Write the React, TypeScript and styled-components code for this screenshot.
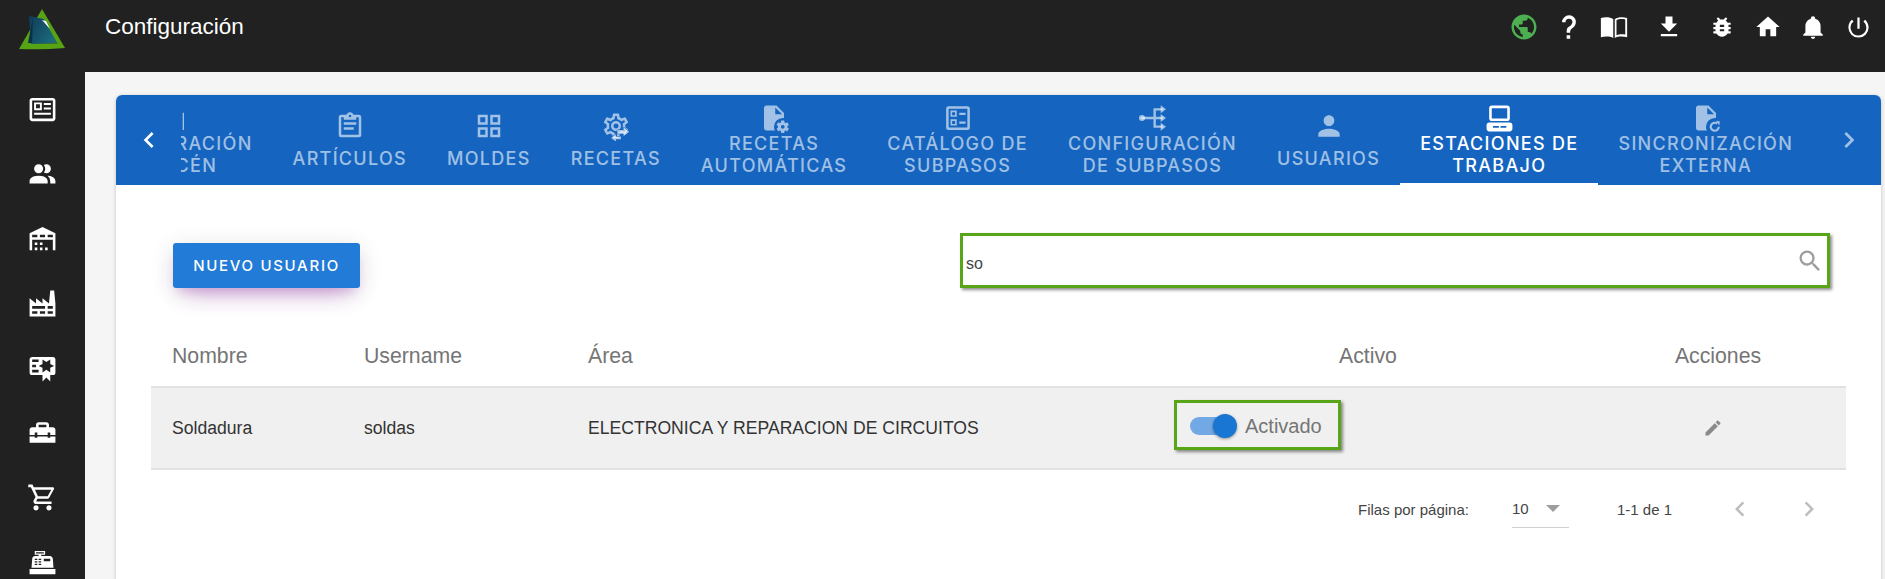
import { ReactNode } from 'react';
import styled, { createGlobalStyle } from 'styled-components';
import {
  MdChevronLeft,
  MdChevronRight,
  MdEdit,
  MdOutlineGridView,
  MdPerson,
  MdPowerSettingsNew,
  MdPublic,
  MdSearch,
} from 'react-icons/md';

const GlobalStyle = createGlobalStyle`
  html, body {
    margin: 0;
    height: 100%;
    overflow: hidden;
    background: #f5f5f5;
    font-family: "Liberation Sans", Arial, sans-serif;
  }
  #root {
    height: 100%;
  }
`;

const Shell = styled.div`
  display: grid;
  grid-template-columns: 85px 1fr;
  grid-template-rows: 72px 1fr;
  height: 100vh;
  overflow: hidden;
`;

const Sidebar = styled.aside`
  grid-row: 1 / 3;
  background: #212121;
  overflow: hidden;
`;

const LogoWrap = styled.div`
  height: 72px;
  padding: 9px 0 0 19px;
  box-sizing: border-box;
`;

const SideNav = styled.nav`
  padding-top: 5px;
`;

const SideItem = styled.div`
  height: 64.7px;
  display: flex;
  align-items: center;
  justify-content: center;
  color: #fff;
`;

const Header = styled.header`
  background: #212121;
  color: #fff;
  display: flex;
  align-items: flex-start;
  justify-content: space-between;
  padding-right: 4px;
`;

const Title = styled.h1`
  margin: 0;
  padding-left: 20px;
  font: 400 22.5px/54px "Liberation Sans", Arial, sans-serif;
  color: #fff;
`;

const TopIcons = styled.div`
  display: flex;
  height: 54px;
  align-items: center;
`;

const TopIcon = styled.span<{ $extra?: number; $color?: string }>`
  width: 45px;
  margin-left: ${(p) => p.$extra ?? 0}px;
  display: flex;
  align-items: center;
  justify-content: center;
  color: ${(p) => p.$color ?? '#fff'};
`;

const Main = styled.main`
  padding: 23px 4px 0 31px;
  min-width: 0;
`;

const Card = styled.section`
  background: #fff;
  border-radius: 6px;
  height: 520px;
  box-shadow: 0 1px 4px rgba(0, 0, 0, 0.2);
  overflow: hidden;
`;

const TabBar = styled.div`
  height: 90px;
  background: #1565c0;
  display: flex;
`;

const ScrollButton = styled.div<{ $faded?: boolean }>`
  width: 65px;
  flex: none;
  display: flex;
  align-items: center;
  justify-content: center;
  color: ${(p) => (p.$faded ? 'rgba(255,255,255,.6)' : '#fff')};
`;

const TabScroller = styled.div`
  flex: 1;
  min-width: 0;
  overflow: hidden;
`;

const TabStrip = styled.div`
  display: flex;
  height: 100%;
  margin-left: -117.5px;
`;

const Tab = styled.div<{ $active?: boolean; $lines: number }>`
  flex: none;
  height: 100%;
  box-sizing: border-box;
  padding: 5px 20px 0;
  display: flex;
  flex-direction: column;
  align-items: center;
  justify-content: center;
  gap: ${(p) => (p.$lines === 1 ? 10 : 3)}px;
  color: ${(p) => (p.$active ? '#fff' : 'rgba(255,255,255,.6)')};
  border-bottom: 2px solid ${(p) => (p.$active ? '#fff' : 'transparent')};
`;

const TabIcon = styled.span`
  height: 24px;
  display: flex;
  align-items: center;
  justify-content: center;
`;

const TabLabel = styled.span`
  font: 500 18px/21.6px Inter, sans-serif;
  letter-spacing: 1.3px;
  text-align: center;
  white-space: pre-line;
`;

const Toolbar = styled.div`
  display: flex;
  align-items: flex-end;
  justify-content: space-between;
  padding: 48px 51px 0 57px;
`;

const PrimaryButton = styled.button`
  width: 187px;
  height: 45px;
  border: 0;
  border-radius: 3px;
  background: #227bd6;
  color: #fff;
  font: 500 15px Inter, sans-serif;
  letter-spacing: 1.7px;
  box-shadow: 0 14px 26px -12px rgba(156, 39, 176, 0.42),
    0 4px 23px 0 rgba(0, 0, 0, 0.12), 0 8px 10px -5px rgba(156, 39, 176, 0.2);
`;

const SearchBox = styled.div`
  width: 870px;
  height: 55px;
  box-sizing: border-box;
  border: 3px solid #58a618;
  box-shadow: 2px 2px 3px rgba(0, 0, 0, 0.45);
  display: flex;
  align-items: center;
  justify-content: space-between;
  padding: 7px 3px 0 3px;
  color: #444;
  font: 400 16px "Liberation Sans", Arial, sans-serif;
`;

const SearchIcon = styled.span`
  display: flex;
  margin-top: -7px;
  color: #9e9e9e;
`;

const Table = styled.div`
  margin: 36px 35px 0;
`;

const Row = styled.div<{ $head?: boolean }>`
  display: grid;
  grid-template-columns: 192px 224px 586px 430px 263px;
  align-items: center;
  box-sizing: border-box;
  height: ${(p) => (p.$head ? 62 : 84)}px;
  padding-top: ${(p) => (p.$head ? 2 : 0)}px;
  background: ${(p) => (p.$head ? 'transparent' : '#f0f0f0')};
  border-top: ${(p) => (p.$head ? 'none' : '2px solid #e2e2e2')};
  border-bottom: ${(p) => (p.$head ? 'none' : '2px solid #e2e2e2')};
  color: ${(p) => (p.$head ? '#757575' : '#333')};
  font-size: ${(p) => (p.$head ? 21.25 : 17.6)}px;
`;

const Cell = styled.div<{ $center?: boolean; $shift?: number }>`
  padding-left: ${(p) => (p.$center ? p.$shift ?? 0 : 21)}px;
  text-align: ${(p) => (p.$center ? 'center' : 'left')};
  display: ${(p) => (p.$center ? 'flex' : 'block')};
  justify-content: center;
`;

const ToggleBox = styled.div`
  width: 167px;
  height: 50px;
  box-sizing: border-box;
  margin-bottom: 6px;
  border: 3px solid #58a618;
  box-shadow: 2px 2px 3px rgba(0, 0, 0, 0.45);
  display: flex;
  align-items: center;
  padding: 2px 0 0 13px;
  gap: 9px;
`;

const Track = styled.span`
  position: relative;
  width: 43px;
  height: 18px;
  border-radius: 9px;
  background: #72a8e3;
`;

const Thumb = styled.span`
  position: absolute;
  right: -4px;
  top: -3px;
  width: 24px;
  height: 24px;
  border-radius: 50%;
  background: #1976d2;
  box-shadow: 0 1px 3px rgba(0, 0, 0, 0.4);
`;

const ToggleText = styled.span`
  margin-left: 3px;
  font-size: 20px;
  color: #757575;
`;

const EditIcon = styled.span`
  display: flex;
  color: #8a8a8a;
  margin-right: 3px;
`;

const Pagination = styled.div`
  height: 78px;
  display: flex;
  align-items: center;
  justify-content: flex-end;
  padding-right: 57px;
  font: 400 15px "Liberation Sans", Arial, sans-serif;
  color: #444;
`;

const PageSelect = styled.div`
  width: 57px;
  height: 38px;
  margin-left: 43px;
  box-sizing: border-box;
  border-bottom: 1px solid #cfcfcf;
  display: flex;
  align-items: center;
  justify-content: space-between;
  padding-right: 9px;
`;

const Caret = styled.span`
  width: 0;
  height: 0;
  border-left: 7px solid transparent;
  border-right: 7px solid transparent;
  border-top: 7px solid #9e9e9e;
`;

const PageRange = styled.span`
  margin-left: 48px;
`;

const PageArrow = styled.span<{ $gap: number }>`
  display: flex;
  margin-left: ${(p) => p.$gap}px;
  color: #bdbdbd;
`;

const Glyph = ({ d, size = 24, children }: { d?: string; size?: number; children?: ReactNode }) => (
  <svg width={size} height={size} viewBox="0 0 24 24" fill="currentColor" style={{ flex: 'none' }}>
    {d && <path d={d} fillRule="evenodd" />}
    {children}
  </svg>
);

const Logo = () => (
  <svg width="46" height="41" viewBox="0 0 46 41">
    <defs>
      <linearGradient id="logoFill" x1="0" y1="0" x2="1" y2="0.6">
        <stop offset="0" stopColor="#0f3c58" />
        <stop offset="1" stopColor="#1c6a7c" />
      </linearGradient>
    </defs>
    <path d="M23 0 L46 39 Q24 41 0 40 Z" fill="#56a314" />
    <path d="M23 10 L39 35 L16 35 Z" fill="#212121" opacity="0.35" />
    <path d="M10 7 L25 10 L38 34 L12 35 Z" fill="url(#logoFill)" />
    <path d="M14 8 L13 34 L9 34 Z" fill="#0c3047" />
    <path d="M23 11 L27 12 L31 20 Z" fill="#fff" />
  </svg>
);

const GEAR =
  'M19.43 12.98c.04-.32.07-.64.07-.98 0-.34-.03-.66-.07-.98l2.11-1.65c.19-.15.24-.42.12-.64l-2-3.46c-.09-.16-.26-.25-.44-.25-.06 0-.12.01-.17.03l-2.49 1c-.52-.4-1.08-.73-1.69-.98l-.38-2.65C14.46 2.18 14.25 2 14 2h-4c-.25 0-.46.18-.49.42l-.38 2.65c-.61.25-1.17.59-1.69.98l-2.49-1c-.06-.02-.12-.03-.18-.03-.17 0-.34.09-.43.25l-2 3.46c-.13.22-.07.49.12.64l2.11 1.65c-.04.32-.07.65-.07.98 0 .33.03.66.07.98l-2.11 1.65c-.19.15-.24.42-.12.64l2 3.46c.09.16.26.25.44.25.06 0 .12-.01.17-.03l2.49-1c.52.4 1.08.73 1.69.98l.38 2.65c.03.24.24.42.49.42h4c.25 0 .46-.18.49-.42l.38-2.65c.61-.25 1.17-.59 1.69-.98l2.49 1c.06.02.12.03.18.03.17 0 .34-.09.43-.25l2-3.46c.12-.22.07-.49-.12-.64l-2.11-1.65zm-1.98-1.71c.04.31.05.52.05.73 0 .21-.02.43-.05.73l-.14 1.13.89.7 1.08.84-.7 1.21-1.27-.51-1.04-.42-.9.68c-.43.32-.84.56-1.25.73l-1.06.43-.16 1.13-.2 1.35h-1.4l-.19-1.35-.16-1.13-1.06-.43c-.43-.18-.83-.41-1.23-.71l-.91-.7-1.06.43-1.27.51-.7-1.21 1.08-.84.89-.7-.14-1.13c-.03-.31-.05-.54-.05-.74s.02-.43.05-.73l.14-1.13-.89-.7-1.08-.84.7-1.21 1.27.51 1.04.42.9-.68c.43-.32.84-.56 1.25-.73l1.06-.43.16-1.13.2-1.35h1.39l.19 1.35.16 1.13 1.06.43c.43.18.83.41 1.23.71l.91.7 1.06-.43 1.27-.51.7 1.21-1.07.85-.89.7.14 1.13zM12 8c-2.21 0-4 1.79-4 4s1.79 4 4 4 4-1.79 4-4-1.79-4-4-4zm0 6c-1.1 0-2-.9-2-2s.9-2 2-2 2 .9 2 2-.9 2-2 2z';
const FILE_CUT =
  'M6 2C4.89 2 4 2.9 4 4V20C4 21.11 4.89 22 6 22H12.68A7 7 0 0 1 12 19A7 7 0 0 1 19 12A7 7 0 0 1 20 12.08V8L14 2H6M13 3.5L18.5 9H13V3.5Z';
const SMALL_COG =
  'M18 14C17.87 14 17.76 14.09 17.74 14.21L17.55 15.53C17.25 15.66 16.96 15.82 16.7 16L15.46 15.5C15.35 15.5 15.22 15.5 15.15 15.63L14.15 17.36C14.09 17.47 14.11 17.6 14.21 17.68L15.27 18.5C15.25 18.67 15.24 18.83 15.24 19C15.24 19.17 15.25 19.33 15.27 19.5L14.21 20.32C14.12 20.4 14.09 20.53 14.15 20.64L15.15 22.37C15.21 22.5 15.34 22.5 15.46 22.5L16.7 22C16.96 22.18 17.24 22.35 17.55 22.47L17.74 23.79C17.76 23.91 17.86 24 18 24H20C20.11 24 20.22 23.91 20.24 23.79L20.43 22.47C20.73 22.34 21 22.18 21.27 22L22.5 22.5C22.63 22.5 22.76 22.5 22.83 22.37L23.83 20.64C23.89 20.53 23.86 20.4 23.77 20.32L22.7 19.5C22.72 19.33 22.74 19.17 22.74 19C22.74 18.83 22.73 18.67 22.7 18.5L23.76 17.68C23.85 17.6 23.88 17.47 23.82 17.36L22.82 15.63C22.76 15.5 22.63 15.5 22.5 15.5L21.27 16C21 15.82 20.73 15.65 20.42 15.53L20.23 14.21C20.22 14.09 20.11 14 20 14H18M19 17.5C19.83 17.5 20.5 18.17 20.5 19C20.5 19.83 19.83 20.5 19 20.5C18.16 20.5 17.5 19.83 17.5 19C17.5 18.17 18.17 17.5 19 17.5Z';
const CLIPBOARD =
  'M19,3H14.82C14.4,1.84 13.3,1 12,1C10.7,1 9.6,1.84 9.18,3H5A2,2 0 0,0 3,5V19A2,2 0 0,0 5,21H19A2,2 0 0,0 21,19V5A2,2 0 0,0 19,3M12,3A1,1 0 0,1 13,4A1,1 0 0,1 12,5A1,1 0 0,1 11,4A1,1 0 0,1 12,3M7,7H17V5H19V19H5V5H7V7M17,11H7V9H17V11M15,15H7V13H15V15Z';

const RecipesIcon = () => (
  <Glyph size={30}>
    <path d={GEAR} />
    <path d="M13 15.2h5v-2.2l4.6 3.6-4.6 3.6v-2H13zM16 20.4h-4v-1.9l-4 3 4 3v-1.9h4z" stroke="#1565c0" strokeWidth="0.8" paintOrder="stroke" />
  </Glyph>
);

const AutoRecipesIcon = () => (
  <Glyph size={30}>
    <path d={FILE_CUT} fillRule="evenodd" />
    <path d={SMALL_COG} fillRule="evenodd" />
  </Glyph>
);

const CatalogIcon = () => (
  <Glyph size={30}>
    <path
      fillRule="evenodd"
      d="M4.5 2.5H19.5A2 2 0 0 1 21.5 4.5V19.5A2 2 0 0 1 19.5 21.5H4.5A2 2 0 0 1 2.5 19.5V4.5A2 2 0 0 1 4.5 2.5ZM4.5 4.5V19.5H19.5V4.5ZM6 6H11V11H6ZM7.3 7.3V9.7H9.7V7.3ZM6 13H11V18H6ZM7.3 14.3V16.7H9.7V14.3ZM13 7.7H18V9.5H13ZM13 14.7H18V16.5H13Z"
    />
  </Glyph>
);

const BranchIcon = () => (
  <Glyph size={32}>
    <circle cx="4.5" cy="12" r="2.3" />
    <path d="M4 12H20M14 12V5.5H20M14 12V18.5H20" fill="none" stroke="currentColor" strokeWidth="1.8" />
    <path d="M18.5 2.5L22.5 5.5L18.5 8.5ZM18.5 9L22.5 12L18.5 15ZM18.5 15.5L22.5 18.5L18.5 21.5Z" />
  </Glyph>
);

const StationIcon = () => (
  <Glyph size={31}>
    <path
      fillRule="evenodd"
      d="M6 2C4.89 2 4 2.89 4 4V12C4 13.11 4.89 14 6 14H18C19.11 14 20 13.11 20 12V4C20 2.89 19.11 2 18 2H6M6 4H18V12H6V4M4 15C2.89 15 2 15.89 2 17V20C2 21.11 2.89 22 4 22H20C21.11 22 22 21.11 22 20V17C22 15.89 21.11 15 20 15H4M7 17.8H11.5V19.2H7V17.8M12.8 17.8H17.3V19.2H12.8V17.8Z"
    />
  </Glyph>
);

const SyncFileIcon = () => (
  <Glyph size={30}>
    <path d={FILE_CUT} fillRule="evenodd" />
    <path d="M22.2 19A3.2 3.2 0 1 1 21 16.5" fill="none" stroke="currentColor" strokeWidth="1.7" />
    <path d="M20 14.2L23 14.5L22.7 18Z" />
  </Glyph>
);

const EdgeIcon = () => <Glyph size={32} d="M23 8H24V21H23Z" />;

const tabs: { label: string; lines: number; icon: ReactNode; active?: boolean }[] = [
  { label: 'CONFIGURACIÓN\nALMACÉN', lines: 2, icon: <EdgeIcon /> },
  { label: 'ARTÍCULOS', lines: 1, icon: <Glyph d={CLIPBOARD} size={30} /> },
  { label: 'MOLDES', lines: 1, icon: <MdOutlineGridView size={30} /> },
  { label: 'RECETAS', lines: 1, icon: <RecipesIcon /> },
  { label: 'RECETAS\nAUTOMÁTICAS', lines: 2, icon: <AutoRecipesIcon /> },
  { label: 'CATÁLOGO DE\nSUBPASOS', lines: 2, icon: <CatalogIcon /> },
  { label: 'CONFIGURACIÓN\nDE SUBPASOS', lines: 2, icon: <BranchIcon /> },
  { label: 'USUARIOS', lines: 1, icon: <MdPerson size={32} /> },
  { label: 'ESTACIONES DE\nTRABAJO', lines: 2, icon: <StationIcon />, active: true },
  { label: 'SINCRONIZACIÓN\nEXTERNA', lines: 2, icon: <SyncFileIcon /> },
];

const sideIcons = [
  'M20 3H4C2.9 3 2 3.9 2 5V19C2 20.1 2.9 21 4 21H20C21.1 21 22 20.1 22 19V5C22 3.9 21.1 3 20 3ZM20 19H4V5H20ZM5.5 6.5H11.5V12.5H5.5ZM7 8V11H10V8ZM13 7H18.5V8.5H13ZM13 10.5H18.5V12H13ZM5.5 14.5H18.5V16H5.5Z',
  'M16 17V19H2V17S2 13 9 13 16 17 16 17M12.5 7.5A3.5 3.5 0 1 0 9 11A3.5 3.5 0 0 0 12.5 7.5M15.94 13A5.32 5.32 0 0 1 18 17V19H22V17S22 13.37 15.94 13M15 4A3.39 3.39 0 0 0 13.07 4.59A5 5 0 0 1 13.07 10.41A3.39 3.39 0 0 0 15 11A3.5 3.5 0 0 0 15 4Z',
  'M6 19H8V21H6V19M12 3L2 8V21H4V13H20V21H22V8L12 3M8 11H4V9H8V11M14 11H10V9H14V11M20 11H16V9H20V11M6 15H8V17H6V15M10 15H12V17H10V15M10 19H12V21H10V19M14 19H16V21H14V19Z',
  'M4 18V20H8V18H4M4 14V16H14V14H4M10 18V20H14V18H10M16 14V16H20V14H16M16 18V20H20V18H16M2 22V8L7 12V8L12 12V8L17 12L18 2H21L22 12V22H2Z',
  'M4 3C2.89 3 2 3.89 2 5V15A2 2 0 0 0 4 17H12V22L15 19L18 22V17H20A2 2 0 0 0 22 15V5A2 2 0 0 0 20 3H4M12 5L15 7L18 5V8.5L21 10L18 11.5V15L15 13L12 15V11.5L9 10L12 8.5V5M4 5H9V7H4V5M4 9H7V11H4V9M4 13H9V15H4V13Z',
  'M18 16H16V15H8V16H6V15H2V20H22V15H18V16M20 8H17V6C17 4.9 16.1 4 15 4H9C7.9 4 7 4.9 7 6V8H4C2.9 8 2 8.9 2 10V14H6V12H8V14H16V12H18V14H22V10C22 8.9 21.1 8 20 8M15 8H9V6H15V8Z',
  'M17 18A2 2 0 0 1 19 20A2 2 0 0 1 17 22C15.89 22 15 21.1 15 20C15 18.89 15.89 18 17 18M1 2H4.27L5.21 4H20A1 1 0 0 1 21 5C21 5.17 20.95 5.34 20.88 5.5L17.3 11.97C16.96 12.58 16.3 13 15.55 13H8.1L7.2 14.63L7.17 14.75A0.25 0.25 0 0 0 7.42 15H19V17H7C5.89 17 5 16.1 5 15C5 14.65 5.09 14.32 5.24 14.04L6.6 11.59L3 4H1V2M7 18A2 2 0 0 1 9 20A2 2 0 0 1 7 22C5.89 22 5 21.1 5 20C5 18.89 5.89 18 7 18M16 11L18.78 6H6.14L8.5 11H16Z',
  'M2 17H22V21H2V17M6.25 7H9V6H6V3H14V6H11V7H17.8C18.8 7 19.8 8 20 9L20.5 16H3.5L4.05 9C4.05 8 5.05 7 6.25 7M13 9V11H18V9H13M6 9V10H8V9H6M9 9V10H11V9H9M6 11V12H8V11H6M9 11V12H11V11H9M6 13V14H8V13H6M9 13V14H11V13H9M7 4V5H13V4H7Z',
];

export default function App() {
  return (
    <>
      <GlobalStyle />
      <Shell>
        <Sidebar>
          <LogoWrap>
            <Logo />
          </LogoWrap>
          <SideNav>
            {sideIcons.map((d) => (
              <SideItem key={d}>
                <svg width="31" height="31" viewBox="0 0 24 24" fill="currentColor">
                  <path d={d} fillRule="evenodd" />
                </svg>
              </SideItem>
            ))}
          </SideNav>
        </Sidebar>

        <Header>
          <Title>Configuración</Title>
          <TopIcons>
            <TopIcon $color="#4caf50">
              <MdPublic size={30} />
            </TopIcon>
            <TopIcon>
              <Glyph size={28} d="M10 19H13V22H10V19M12 2C17.35 2.22 19.68 7.62 16.5 11.67C15.67 12.67 14.33 13.33 13.67 14.17C13 15 13 16 13 17H10C10 15.33 10 13.92 10.67 12.92C11.33 11.92 12.67 11.33 13.5 10.67C15.92 8.43 15.32 5.26 12 5A3 3 0 0 0 9 8H6A6 6 0 0 1 12 2Z" />
            </TopIcon>
            <TopIcon>
              <Glyph size={30} d="M1.5 4.8C4.5 3.8 9 3.9 11.4 5.7V20.7C9 19.3 4.5 19.2 1.5 20.2ZM12.6 5.7C15 3.9 19.5 3.8 22.5 4.8V20.2C19.5 19.2 15 19.3 12.6 20.7ZM14 6.5V18.5C16 17.6 19 17.5 21 18V6C19 5.5 16 5.5 14 6.5Z" />
            </TopIcon>
            <TopIcon $extra={10}>
              <Glyph size={28} d="M5 20H19V18H5M19 9H15V3H9V9H5L12 16L19 9Z" />
            </TopIcon>
            <TopIcon $extra={8}>
              <Glyph size={26} d="M14 12H10V10H14M14 16H10V14H14M20 8H17.19C16.74 7.22 16.12 6.55 15.37 6.04L17 4.41L15.59 3L13.42 5.17C12.96 5.06 12.5 5 12 5C11.5 5 11.04 5.06 10.59 5.17L8.41 3L7 4.41L8.62 6.04C7.88 6.55 7.26 7.22 6.81 8H4V10H6.09C6.04 10.33 6 10.66 6 11V12H4V14H6V15C6 15.34 6.04 15.67 6.09 16H4V18H6.81C7.85 19.79 9.78 21 12 21C14.22 21 16.15 19.79 17.19 18H20V16H17.91C17.96 15.67 18 15.34 18 15V14H20V12H18V11C18 10.66 17.96 10.33 17.91 10H20V8Z" />
            </TopIcon>
            <TopIcon $extra={1}>
              <Glyph size={28} d="M10 20V14H14V20H19V12H22L12 3L2 12H5V20H10Z" />
            </TopIcon>
            <TopIcon>
              <Glyph size={26} d="M21 19V20H3V19L5 17V11C5 7.9 7.03 5.17 10 4.29C10 4.19 10 4.1 10 4A2 2 0 0 1 12 2A2 2 0 0 1 14 4C14 4.1 14 4.19 14 4.29C16.97 5.17 19 7.9 19 11V17L21 19M14 21A2 2 0 0 1 12 23A2 2 0 0 1 10 21" />
            </TopIcon>
            <TopIcon $extra={1}>
              <MdPowerSettingsNew size={27} />
            </TopIcon>
          </TopIcons>
        </Header>

        <Main>
          <Card>
            <TabBar>
              <ScrollButton>
                <MdChevronLeft size={32} />
              </ScrollButton>
              <TabScroller>
                <TabStrip>
                  {tabs.map((tab) => (
                    <Tab key={tab.label} $active={tab.active} $lines={tab.lines}>
                      <TabIcon>{tab.icon}</TabIcon>
                      <TabLabel>{tab.label}</TabLabel>
                    </Tab>
                  ))}
                </TabStrip>
              </TabScroller>
              <ScrollButton $faded>
                <MdChevronRight size={32} />
              </ScrollButton>
            </TabBar>

            <Toolbar>
              <PrimaryButton>NUEVO USUARIO</PrimaryButton>
              <SearchBox>
                <span>so</span>
                <SearchIcon>
                  <MdSearch size={28} />
                </SearchIcon>
              </SearchBox>
            </Toolbar>

            <Table>
              <Row $head>
                <Cell>Nombre</Cell>
                <Cell>Username</Cell>
                <Cell>Área</Cell>
                <Cell $center>Activo</Cell>
                <Cell $center $shift={7}>Acciones</Cell>
              </Row>
              <Row>
                <Cell>Soldadura</Cell>
                <Cell>soldas</Cell>
                <Cell>ELECTRONICA Y REPARACION DE CIRCUITOS</Cell>
                <Cell>
                  <ToggleBox>
                    <Track>
                      <Thumb />
                    </Track>
                    <ToggleText>Activado</ToggleText>
                  </ToggleBox>
                </Cell>
                <Cell $center>
                  <EditIcon>
                    <MdEdit size={20} />
                  </EditIcon>
                </Cell>
              </Row>
            </Table>

            <Pagination>
              <span>Filas por página:</span>
              <PageSelect>
                <span>10</span>
                <Caret />
              </PageSelect>
              <PageRange>1-1 de 1</PageRange>
              <PageArrow $gap={53}>
                <MdChevronLeft size={30} />
              </PageArrow>
              <PageArrow $gap={39}>
                <MdChevronRight size={30} />
              </PageArrow>
            </Pagination>
          </Card>
        </Main>
      </Shell>
    </>
  );
}
